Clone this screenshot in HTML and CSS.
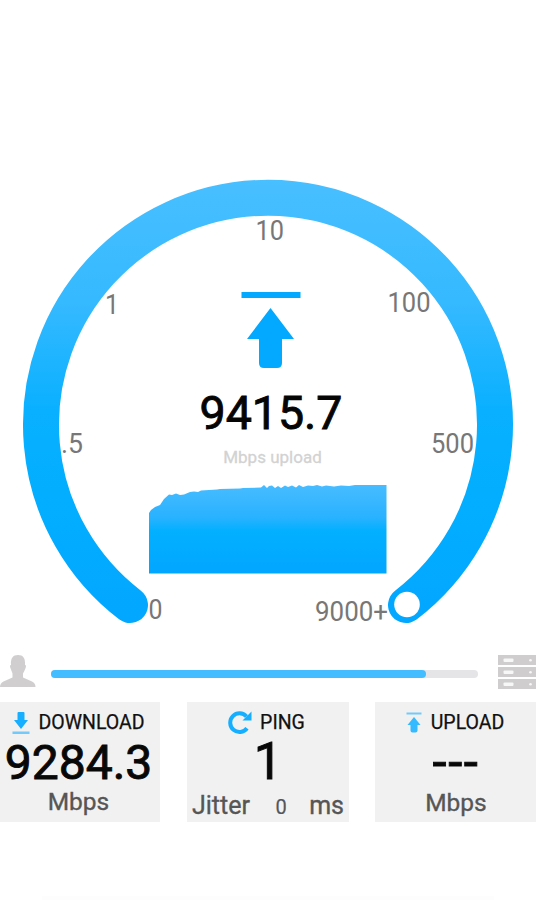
FILE: index.html
```html
<!DOCTYPE html>
<html lang="en">
<head>
<meta charset="utf-8">
<title>Speed test</title>
<link rel="stylesheet" href="styles.css">
</head>
<body>
<main class="app">
  <section class="gauge">
    <svg class="dial" viewBox="0 172 536 468" width="536" height="468">
      <defs>
        <linearGradient id="arc" gradientUnits="userSpaceOnUse" x1="0" y1="180" x2="0" y2="623">
          <stop offset="0" stop-color="#48bfff"/>
          <stop offset=".28" stop-color="#35b9ff"/>
          <stop offset=".52" stop-color="#09b0ff"/>
          <stop offset=".7" stop-color="#03aeff"/>
          <stop offset="1" stop-color="#02a7ff"/>
        </linearGradient>
      </defs>
      <path d="M130 605A227 227 0 1 1 406 605" fill="none" stroke="url(#arc)" stroke-width="36" stroke-linecap="round"/>
      <circle cx="407" cy="604.5" r="12.8" fill="#fff"/>
      <g class="ticks">
        <text x="148.5" y="618.5" textLength="14" lengthAdjust="spacingAndGlyphs">0</text>
        <text x="61" y="453" textLength="22" lengthAdjust="spacingAndGlyphs">.5</text>
        <text x="105" y="313.5" textLength="14" lengthAdjust="spacingAndGlyphs">1</text>
        <text x="255.500" y="240" textLength="28.500" lengthAdjust="spacingAndGlyphs">10</text>
        <text x="387.500" y="312" textLength="43" lengthAdjust="spacingAndGlyphs">100</text>
        <text x="431" y="453" textLength="43" lengthAdjust="spacingAndGlyphs">500</text>
        <text x="315" y="621" textLength="73" lengthAdjust="spacingAndGlyphs">9000+</text>
      </g>
    </svg>
    <div class="readout">
      <svg class="up-arrow" viewBox="0 0 60 77" width="60" height="77">
        <path d="M.5 0H59.5V6H.5ZM29.5 16L53 47H41V71Q41 76 36 76H23Q18 76 18 71V47H6Z"/>
      </svg>
      <strong class="speed">9415.7</strong>
      <span class="caption">Mbps upload</span>
      <svg class="chart" viewBox="0 0 238 90" width="238" height="90">
        <defs>
          <linearGradient id="area" x1="0" y1="0" x2="0" y2="1">
            <stop offset="0" stop-color="#48bcff"/>
            <stop offset=".37" stop-color="#28b2ff"/>
            <stop offset=".52" stop-color="#02b0ff"/>
            <stop offset="1" stop-color="#02a6ff"/>
          </linearGradient>
        </defs>
        <path fill="url(#area)" d="M0 89.5V29L2 26L6 23L11 21L15 15L20 10.500L23 11L27 9.500L31 11L35 10.500L41 8L45 7.500L49 8L52 6.500L68 5.500L71 5L91 4.500L94 4L112 3.500L115 1L118 4L120 2L123 1.500L126 4L129 2L132 4L136 1.500L139 3L143 1.500L147 3.500L150 1L154 3L159 1.500L164 2L168 1L173 2.500L177 1.500L185 2.500L192 1.500L200 2L206 1L237.500 1V89.500Z"/>
      </svg>
    </div>
  </section>

  <section class="route">
    <svg class="person" viewBox="0 0 36 32" width="36" height="32">
      <path d="M18 0C23 0 25.500 3 25 10Q27 10 25 14.500L23 18.500V22.500L32 26.500Q35.500 28 35.500 32H0Q0 28 3.500 26.500L12.500 22.500V18.500L11 14.500Q9 10 11 10C10.500 3 13 0 18 0Z"/>
    </svg>
    <div class="track"><div class="fill"></div></div>
    <svg class="server" viewBox="0 0 38 34" width="38" height="34">
      <path d="M0 0H38V10H0ZM0 12H38V22H0ZM0 24H38V34H0Z" fill="#cfcdce"/>
      <g fill="#f7f7f7">
        <rect x="5.500" y="3.500" width="10" height="3.500" rx="1"/><circle cx="32.500" cy="5.300" r="1.300"/>
        <rect x="5.500" y="15.500" width="10" height="3.500" rx="1"/><circle cx="32.500" cy="17.300" r="1.300"/>
        <rect x="5.500" y="27.500" width="10" height="3.500" rx="1"/><circle cx="32.500" cy="29.300" r="1.300"/>
      </g>
    </svg>
  </section>

  <section class="stats">
    <article class="card download">
      <h2 class="title">
        <svg viewBox="0 0 18 24" width="18" height="24"><path fill="#16afff" d="M5.500 3Q5.500 2 6.500 2H11.500Q12.500 2 12.500 3V10H16L9 19L2 10H5.500Z"/><path fill="#72c9fb" d="M.5 21.500H17.500V24H.5Z"/></svg>
        <span>DOWNLOAD</span>
      </h2>
      <strong class="value">9284.3</strong>
      <span class="unit">Mbps</span>
    </article>
    <article class="card ping">
      <h2 class="title">
        <svg viewBox="0 0 24 24" width="24" height="24"><path fill="none" stroke="#16afff" stroke-width="4" d="M19 18.200A9.300 9.300 0 1 1 18.500 6.500"/><path fill="#16afff" d="M23.500 1.500V10.500H14.500Z"/></svg>
        <span>PING</span>
      </h2>
      <strong class="value">1</strong>
      <span class="unit jitter"><span>Jitter</span><small>0</small><span>ms</span></span>
    </article>
    <article class="card upload">
      <h2 class="title">
        <svg viewBox="0 0 16 21" width="16" height="21"><path fill="#72c9fb" d="M.5 .5H15.500V2.500H.5Z"/><path fill="#35b9ff" d="M8 5L14.500 13H11.500V18.500Q11.500 20.500 9.500 20.500H6.500Q4.500 20.500 4.500 18.500V13H1.500Z"/></svg>
        <span>UPLOAD</span>
      </h2>
      <strong class="value">---</strong>
      <span class="unit">Mbps</span>
    </article>
  </section>
  <footer class="edge"></footer>
</main>
</body>
</html>
```
FILE: styles.css
```css
* { box-sizing: border-box; }
body { margin: 0; background: #fff; font-family: Roboto, "Liberation Sans", sans-serif; }
svg { display: block; flex: none; }
.app { width: 536px; height: 900px; padding-top: 172px; display: flex; flex-direction: column; overflow: hidden; }

.gauge { display: grid; height: 468px; }
.gauge > * { grid-area: 1 / 1; }
.ticks { font-size: 27px; fill: #777; }
.readout { display: flex; flex-direction: column; align-items: center; padding-top: 120px; }
.up-arrow { fill: #02a9ff; margin-left: 6px; }
.speed { margin: 21px 0 0 6px; font-size: 46.5px; line-height: 46px; font-weight: 400; color: #050505; -webkit-text-stroke: .9px #050505; }
.caption { margin: 11px 0 0 9px; font-size: 17px; line-height: 20px; color: #d2d2d2; font-weight: 400; -webkit-text-stroke: .3px #d2d2d2; }
.chart { margin-top: 17px; }

.route { display: flex; align-items: center; height: 62px; padding-top: 6px; }
.person { fill: #d0cecf; margin-bottom: 7px; }
.track { width: 427px; height: 8px; margin-left: 15px; border-radius: 4px; background: #e5e4e7; }
.fill { width: 375px; height: 8px; border-radius: 4px; background: #43bdff; }
.server { margin: 0 0 5px 20px; }

.stats { display: grid; grid-template-columns: 160px 162px 161px; column-gap: 27px; }
.stats .upload { margin-left: -1px; }
.card { height: 120px; background: #f1f1f1; display: flex; flex-direction: column; align-items: center; }
.title { display: flex; align-items: center; height: 24px; margin: 8px 0 0; font-size: 19.5px; line-height: 24px; font-weight: 400; color: #111; }
.title span { -webkit-text-stroke: .25px #111; padding-top: 1px; }
.value { height: 46px; margin-top: 6px; font-size: 48px; line-height: 46px; font-weight: 400; color: #080808; -webkit-text-stroke: .9px #080808; }
.unit { margin-top: 2px; font-size: 24.5px; line-height: 28px; font-weight: 400; color: #565656; -webkit-text-stroke: .35px #565656; }
.download .title { gap: 8px; margin-right: 3px; }
.download .value { margin-right: 3px; }
.download .unit { margin-right: 3px; }
.ping .title { gap: 8px; margin-right: 3px; }
.ping .value { font-size: 51px; margin-top: 5px; }
.upload .title { gap: 9px; margin-right: 2px; }
.upload .value { font-size: 51px; letter-spacing: 1.5px; margin-top: 6px; }
.upload .unit { margin-top: 3px; }
.ping .jitter { display: flex; align-items: baseline; justify-content: space-between; width: 152px; margin-top: 7px; font-size: 25px; }
.jitter small { font-size: 20px; -webkit-text-stroke: .2px #565656; margin-left: 3px; }
.edge { width: 452px; height: 4px; margin: 74px auto 0; background: #fdfdfd; }
```
